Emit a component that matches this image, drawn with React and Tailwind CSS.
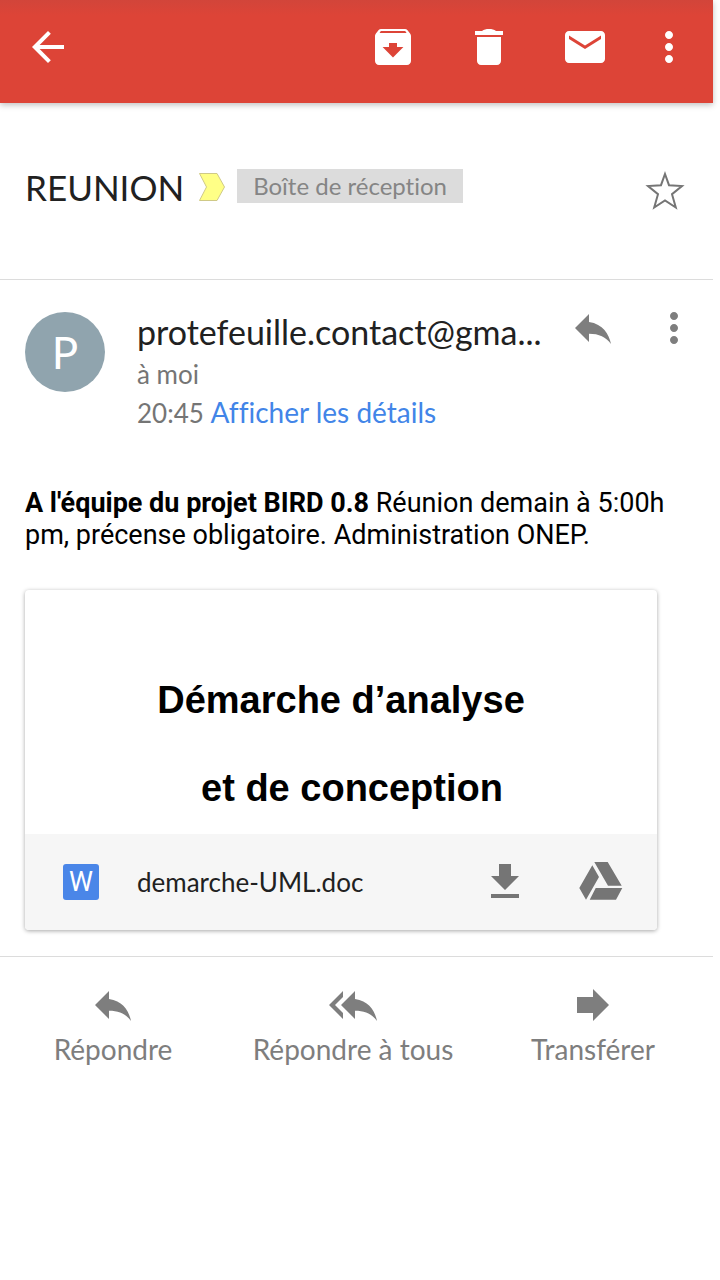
const ICONS = {
  back: 'M20 11H7.83l5.59-5.59L12 4l-8 8 8 8 1.41-1.41L7.83 13H20v-2z',
  archive:
    'M20.54 5.23l-1.39-1.68C18.88 3.21 18.47 3 18 3H6c-.47 0-.88.21-1.16.55L3.46 5.23C3.17 5.57 3 6.02 3 6.5V19c0 1.1.9 2 2 2h14c1.1 0 2-.9 2-2V6.5c0-.48-.17-.93-.46-1.27zM12 17.3L6.8 12H10v-2h4v2h3.2L12 17.3zM5.3 5l.6-1h12.2l.7 1H5.3z',
  trash: 'M6 19c0 1.1.9 2 2 2h8c1.1 0 2-.9 2-2V7H6v12zM19 4h-3.500C14.500 3.200 13.500 3 12 3s-2.500.2-3.500 1H5v2h14V4z',
  mail: 'M20 4H4c-1.1 0-2 .9-2 2v12c0 1.1.9 2 2 2h16c1.1 0 2-.9 2-2V6c0-1.1-.9-2-2-2zm0 4l-8 5-8-5V6.200l8 5 8-5V8z',
  more: 'M12 8c1.1 0 2-.9 2-2s-.9-2-2-2-2 .9-2 2 .9 2 2 2zm0 2c-1.1 0-2 .9-2 2s.9 2 2 2 2-.9 2-2-.9-2-2-2zm0 6c-1.1 0-2 .9-2 2s.9 2 2 2 2-.9 2-2-.9-2-2-2z',
  reply: 'M10 9V5l-7 7 7 7v-4.1c5 0 8.5 1.6 11 5.1-1-5-4-10-11-11z',
  replyAll:
    'M7 8V5l-7 7 7 7v-3l-4-4 4-4zm6 1V5l-7 7 7 7v-4.1c5 0 8.5 1.6 11 5.1-1-5-4-10-11-11z',
  forward: 'M12 8V4l8 8-8 8v-4H4V8z',
  download: 'M19 9h-4V3H9v6H5l7 7 7-7zM5 18v2h14v-2H5z',
  drive:
    'M8.65 2h6.7l7 11.85H15.5zM7.65 3.65L11 9.5 4.5 20.85 1.15 15zM9.35 15h13.3l-3.15 5.85H6.35z',
}

function Icon({ name }) {
  return (
    <svg viewBox="0 0 24 24" className="size-12 fill-current" aria-hidden="true">
      <path d={ICONS[name]} />
    </svg>
  )
}

function IconButton({ name, label, className = '' }) {
  return (
    <button type="button" aria-label={label} className={`size-12 shrink-0 ${className}`}>
      <Icon name={name} />
    </button>
  )
}

function Action({ name, label }) {
  return (
    <button type="button" className="flex flex-col items-center text-[#7e7e7e]">
      <Icon name={name} />
      <span className="text-[28px] leading-10">{label}</span>
    </button>
  )
}

export default function App() {
  return (
    <div className="min-h-screen bg-white pr-[7px] font-['Lato',sans-serif] text-[#212121] [font-variant-ligatures:none]">
      <header className="flex h-[103px] items-start bg-linear-to-b from-[#d2453a] to-[#dd4437] to-15% pt-[23px] pr-5 pl-6 text-white shadow-[0_2px_6px_rgba(0,0,0,0.25)]">
        <IconButton name="back" label="Retour" />
        <div className="ml-auto flex gap-12">
          <IconButton name="archive" label="Archiver" />
          <IconButton name="trash" label="Supprimer" />
          <IconButton name="mail" label="Marquer comme non lu" />
        </div>
        <IconButton name="more" label="Autres options" className="ml-9" />
      </header>

      <main>
        <section className="flex h-[177px] items-start border-b border-[#dcdcdc] pt-16 pr-6 pl-[25px]">
          <h1 className="text-[35px] leading-10">REUNION</h1>
          <svg viewBox="0 0 26 28" className="mt-[6px] ml-[15px] h-7 w-[26px]" aria-hidden="true">
            <path d="M.5.5H18l7.5 13.5L18 27.500H.5L7.500 14z" fill="#ffff86" stroke="#cfc987" />
          </svg>
          <span className="mt-[2px] ml-3 bg-[#dcdcdc] px-4 text-[24px] leading-[34px] text-[#858585]">
            Boîte de réception
          </span>
          <button type="button" aria-label="Suivre" className="ml-auto size-12">
            <svg viewBox="0 0 48 48" className="size-12" aria-hidden="true">
              <path
                d="M24 7l4 11.200L41 19l-10 8.200L34.800 40.500 24 33.500 13.200 40.500 17 27.200 7 19l13-.8z"
                fill="none"
                stroke="#757575"
                strokeWidth="2"
              />
            </svg>
          </button>
        </section>

        <section className="flex items-start pt-8 pl-[25px]">
          <div className="flex size-20 shrink-0 items-center justify-center rounded-full bg-[#90a4ae] text-[44px] text-white">
            P
          </div>
          <div className="ml-8 min-w-0 flex-1">
            <p className="truncate text-[34px] leading-10">protefeuille.contact@gma...</p>
            <p className="mt-[3px] text-[26px] leading-[38px] text-[#757575]">à moi</p>
            <p className="text-[26px] leading-[38px] text-[#757575]">
              20:45{' '}
              <a href="#details" className="text-[28px] text-[#4285e8]">
                Afficher les détails
              </a>
            </p>
          </div>
          <div className="-mt-2 mr-[15px] ml-6 flex gap-[33px] text-[#7e7e7e]">
            <IconButton name="reply" label="Répondre" />
            <IconButton name="more" label="Plus d'actions" />
          </div>
        </section>

        <p className="mt-[55px] pr-6 pl-[25px] font-['Roboto',sans-serif] text-[27px] leading-8 text-black">
          <b>A l'équipe du projet BIRD 0.8</b> Réunion demain à 5:00h pm, précense obligatoire.
          Administration ONEP.
        </p>

        <article className="mt-[39px] mr-14 ml-[25px] overflow-hidden rounded-[4px] shadow-[0_1px_4px_rgba(0,0,0,0.35)]">
          <div className="flex h-[244px] flex-col items-center pt-[88px] font-['Liberation_Sans',sans-serif] text-[38px] leading-[44px] font-bold text-black">
            <p>Démarche d’analyse</p>
            <p className="mt-11 pl-[22px]">et de conception</p>
          </div>
          <div className="flex h-24 items-center bg-[#f6f6f6] pr-8 pl-[38px]">
            <span className="flex size-9 items-center justify-center rounded-[3px] bg-[#4a86e8] font-['Roboto',sans-serif] text-[27px] text-white">
              W
            </span>
            <a href="#demarche-UML" className="ml-[38px] text-[26px] leading-10">
              demarche-UML.doc
            </a>
            <div className="ml-auto flex gap-12 text-[#757575]">
              <IconButton name="download" label="Télécharger" />
              <IconButton name="drive" label="Enregistrer dans Drive" />
            </div>
          </div>
        </article>
      </main>

      <footer className="mt-[26px] border-t border-[#dcdcdc] pt-6">
        <div className="-ml-[7px] grid grid-cols-3">
          <Action name="reply" label="Répondre" />
          <Action name="replyAll" label="Répondre à tous" />
          <Action name="forward" label="Transférer" />
        </div>
      </footer>
    </div>
  )
}
